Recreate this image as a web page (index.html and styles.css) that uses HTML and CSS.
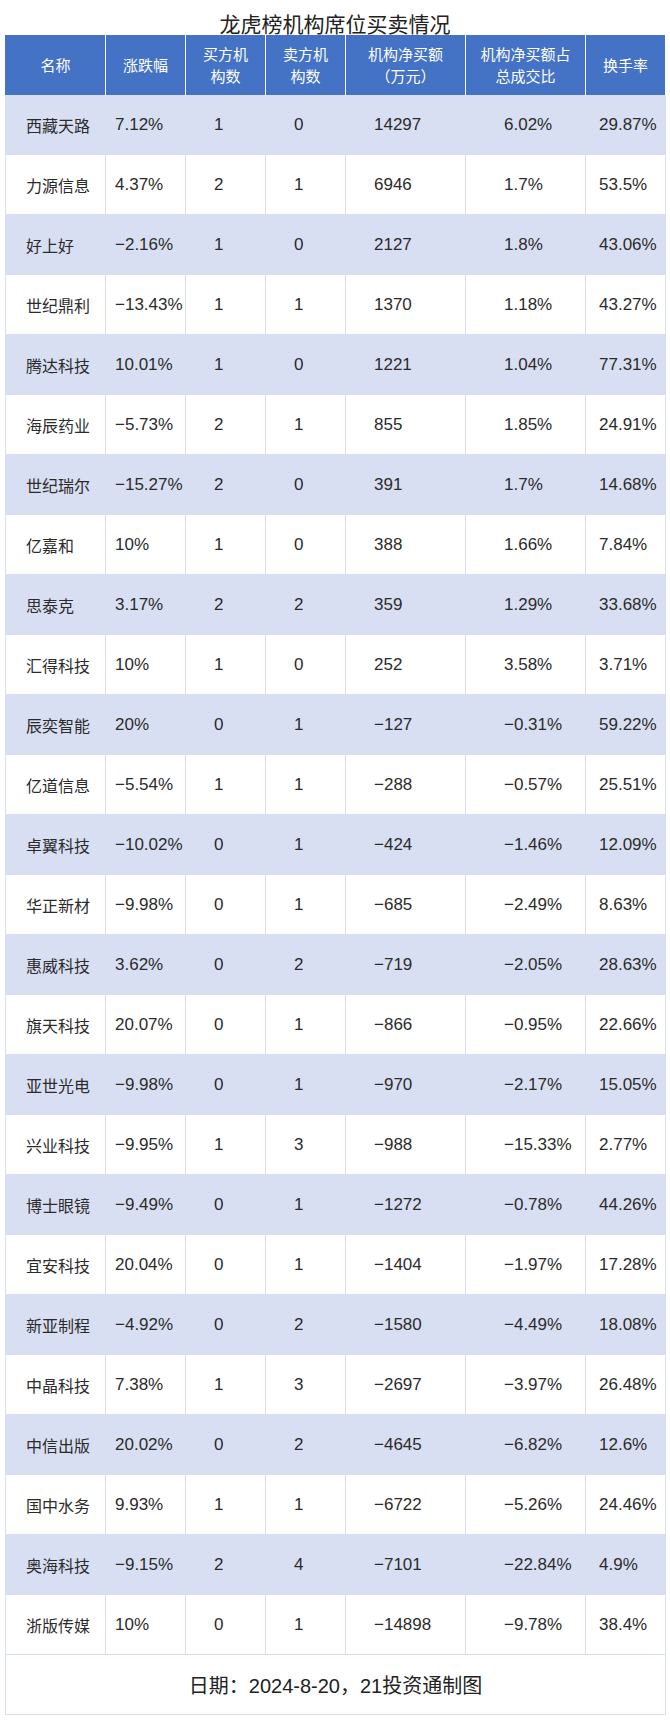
FILE: index.html
```html
<!DOCTYPE html>
<html lang="zh-CN">
<head>
<meta charset="utf-8">
<title>龙虎榜机构席位买卖情况</title>
<link rel="stylesheet" href="styles.css">
</head>
<body>
<div class="page">
  <div class="title">龙虎榜机构席位买卖情况</div>
  <table class="lhb">
    <colgroup>
      <col class="c-name"><col class="c-s"><col class="c-s"><col class="c-s"><col class="c-w"><col class="c-w"><col class="c-s">
    </colgroup>
    <thead>
      <tr>
        <th class="first">名称</th>
        <th>涨跌幅</th>
        <th>买方机<br>构数</th>
        <th>卖方机<br>构数</th>
        <th>机构净买额<br><span class="unit">（万元）</span></th>
        <th>机构净买额占<br>总成交比</th>
        <th>换手率</th>
      </tr>
    </thead>
    <tbody>
      <tr><td class="n">西藏天路</td><td class="chg">7.12%</td><td class="cnt">1</td><td class="cnt">0</td><td class="amt">14297</td><td class="pct">6.02%</td><td class="tr">29.87%</td></tr>
      <tr><td class="n">力源信息</td><td class="chg">4.37%</td><td class="cnt">2</td><td class="cnt">1</td><td class="amt">6946</td><td class="pct">1.7%</td><td class="tr">53.5%</td></tr>
      <tr><td class="n">好上好</td><td class="chg">−2.16%</td><td class="cnt">1</td><td class="cnt">0</td><td class="amt">2127</td><td class="pct">1.8%</td><td class="tr">43.06%</td></tr>
      <tr><td class="n">世纪鼎利</td><td class="chg">−13.43%</td><td class="cnt">1</td><td class="cnt">1</td><td class="amt">1370</td><td class="pct">1.18%</td><td class="tr">43.27%</td></tr>
      <tr><td class="n">腾达科技</td><td class="chg">10.01%</td><td class="cnt">1</td><td class="cnt">0</td><td class="amt">1221</td><td class="pct">1.04%</td><td class="tr">77.31%</td></tr>
      <tr><td class="n">海辰药业</td><td class="chg">−5.73%</td><td class="cnt">2</td><td class="cnt">1</td><td class="amt">855</td><td class="pct">1.85%</td><td class="tr">24.91%</td></tr>
      <tr><td class="n">世纪瑞尔</td><td class="chg">−15.27%</td><td class="cnt">2</td><td class="cnt">0</td><td class="amt">391</td><td class="pct">1.7%</td><td class="tr">14.68%</td></tr>
      <tr><td class="n">亿嘉和</td><td class="chg">10%</td><td class="cnt">1</td><td class="cnt">0</td><td class="amt">388</td><td class="pct">1.66%</td><td class="tr">7.84%</td></tr>
      <tr><td class="n">思泰克</td><td class="chg">3.17%</td><td class="cnt">2</td><td class="cnt">2</td><td class="amt">359</td><td class="pct">1.29%</td><td class="tr">33.68%</td></tr>
      <tr><td class="n">汇得科技</td><td class="chg">10%</td><td class="cnt">1</td><td class="cnt">0</td><td class="amt">252</td><td class="pct">3.58%</td><td class="tr">3.71%</td></tr>
      <tr><td class="n">辰奕智能</td><td class="chg">20%</td><td class="cnt">0</td><td class="cnt">1</td><td class="amt">−127</td><td class="pct">−0.31%</td><td class="tr">59.22%</td></tr>
      <tr><td class="n">亿道信息</td><td class="chg">−5.54%</td><td class="cnt">1</td><td class="cnt">1</td><td class="amt">−288</td><td class="pct">−0.57%</td><td class="tr">25.51%</td></tr>
      <tr><td class="n">卓翼科技</td><td class="chg">−10.02%</td><td class="cnt">0</td><td class="cnt">1</td><td class="amt">−424</td><td class="pct">−1.46%</td><td class="tr">12.09%</td></tr>
      <tr><td class="n">华正新材</td><td class="chg">−9.98%</td><td class="cnt">0</td><td class="cnt">1</td><td class="amt">−685</td><td class="pct">−2.49%</td><td class="tr">8.63%</td></tr>
      <tr><td class="n">惠威科技</td><td class="chg">3.62%</td><td class="cnt">0</td><td class="cnt">2</td><td class="amt">−719</td><td class="pct">−2.05%</td><td class="tr">28.63%</td></tr>
      <tr><td class="n">旗天科技</td><td class="chg">20.07%</td><td class="cnt">0</td><td class="cnt">1</td><td class="amt">−866</td><td class="pct">−0.95%</td><td class="tr">22.66%</td></tr>
      <tr><td class="n">亚世光电</td><td class="chg">−9.98%</td><td class="cnt">0</td><td class="cnt">1</td><td class="amt">−970</td><td class="pct">−2.17%</td><td class="tr">15.05%</td></tr>
      <tr><td class="n">兴业科技</td><td class="chg">−9.95%</td><td class="cnt">1</td><td class="cnt">3</td><td class="amt">−988</td><td class="pct">−15.33%</td><td class="tr">2.77%</td></tr>
      <tr><td class="n">博士眼镜</td><td class="chg">−9.49%</td><td class="cnt">0</td><td class="cnt">1</td><td class="amt">−1272</td><td class="pct">−0.78%</td><td class="tr">44.26%</td></tr>
      <tr><td class="n">宜安科技</td><td class="chg">20.04%</td><td class="cnt">0</td><td class="cnt">1</td><td class="amt">−1404</td><td class="pct">−1.97%</td><td class="tr">17.28%</td></tr>
      <tr><td class="n">新亚制程</td><td class="chg">−4.92%</td><td class="cnt">0</td><td class="cnt">2</td><td class="amt">−1580</td><td class="pct">−4.49%</td><td class="tr">18.08%</td></tr>
      <tr><td class="n">中晶科技</td><td class="chg">7.38%</td><td class="cnt">1</td><td class="cnt">3</td><td class="amt">−2697</td><td class="pct">−3.97%</td><td class="tr">26.48%</td></tr>
      <tr><td class="n">中信出版</td><td class="chg">20.02%</td><td class="cnt">0</td><td class="cnt">2</td><td class="amt">−4645</td><td class="pct">−6.82%</td><td class="tr">12.6%</td></tr>
      <tr><td class="n">国中水务</td><td class="chg">9.93%</td><td class="cnt">1</td><td class="cnt">1</td><td class="amt">−6722</td><td class="pct">−5.26%</td><td class="tr">24.46%</td></tr>
      <tr><td class="n">奥海科技</td><td class="chg">−9.15%</td><td class="cnt">2</td><td class="cnt">4</td><td class="amt">−7101</td><td class="pct">−22.84%</td><td class="tr">4.9%</td></tr>
      <tr><td class="n">浙版传媒</td><td class="chg">10%</td><td class="cnt">0</td><td class="cnt">1</td><td class="amt">−14898</td><td class="pct">−9.78%</td><td class="tr">38.4%</td></tr>
    </tbody>
    <tfoot>
      <tr><td class="foot" colspan="7">日期：2024-8-20，21投资通制图</td></tr>
    </tfoot>
  </table>
</div>
</body>
</html>
```

FILE: styles.css
```css
* { box-sizing: border-box; }

html, body {
  margin: 0;
  padding: 0;
  background: #ffffff;
}

body {
  font-family: "Liberation Sans", "Noto Sans CJK SC", sans-serif;
  color: #2b2b2b;
  text-spacing-trim: space-all;
}

.page {
  width: 670px;
  padding-left: 5px;
}

.title {
  height: 35px;
  padding-top: 12px;
  line-height: 22px;
  font-size: 21px;
  text-align: center;
  padding-right: 5px;
  font-family: "Noto Sans CJK SC", sans-serif;
  color: #222222;
}

.lhb {
  border-collapse: separate;
  border-spacing: 0;
  table-layout: fixed;
  width: 661px;
}

.c-name { width: 101px; }
.c-s { width: 80px; }
.c-w { width: 120px; }

.lhb th {
  height: 60px;
  padding: 0;
  background: #4472c4;
  color: #ffffff;
  font-weight: normal;
  font-size: 15px;
  line-height: 22px;
  text-align: center;
  vertical-align: middle;
  border-right: 1px solid #ffffff;
  font-family: "Noto Sans CJK SC", sans-serif;
  white-space: nowrap;
  text-spacing-trim: space-all;
}

.lhb th .unit {
  font-family: "Noto Sans CJK TC", "Noto Sans CJK SC", sans-serif;
}

.lhb th.first {
  border-left: 1px solid #4472c4;
}

.lhb td {
  height: 60px;
  padding: 0;
  font-size: 17px;
  text-align: left;
  vertical-align: middle;
  white-space: nowrap;
  border-right: 1px solid #d9dff2;
  border-bottom: 1px solid #d9dff2;
}

.lhb tbody tr:nth-child(odd) td {
  background: #d9dff2;
}

.lhb td.n {
  border-left: 1px solid #d9dff2;
  padding-left: 20px;
  font-size: 16px;
  font-family: "Noto Sans CJK SC", sans-serif;
}

.lhb td.chg { padding-left: 9px; }
.lhb td.cnt { padding-left: 28px; }
.lhb td.amt { padding-left: 28px; }
.lhb td.pct { padding-left: 38px; }
.lhb td.tr { padding-left: 13px; }

.lhb td.foot {
  border-left: 1px solid #d9dff2;
  text-align: center;
  padding: 0;
  font-size: 20px;
  background: #ffffff;
  color: #222222;
}
```
